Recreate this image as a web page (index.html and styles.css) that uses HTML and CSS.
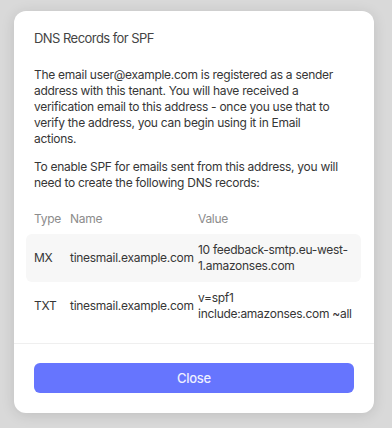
FILE: index.html
```html
<!DOCTYPE html>
<html lang="en">

<head>
    <meta charset="UTF-8">
    <title>DNS Records for SPF</title>
    <link rel="stylesheet" href="styles.css">
</head>

<body>
    <div class="modal">
        <div class="modal-body">
            <h2 class="modal-title">DNS Records for SPF</h2>
            <p>
                The email user@example.com is registered as a sender address with this tenant. You will have
                received a verification email to this address - once you use that to verify the address, you can
                begin using it in Email <br>
                actions.
            </p>
            <p>
                To enable SPF for emails sent from this address, you will need to create the following DNS records:
            </p>

            <!-- records table -->
            <div class="records">
                <div class="record-row head">
                    <span>Type</span>
                    <span>Name</span>
                    <span>Value</span>
                </div>
                <div class="record-row striped">
                    <span>MX</span>
                    <span>tinesmail.example.com</span>
                    <span>10 feedback-smtp.eu-west-1.amazonses.com</span>
                </div>
                <div class="record-row">
                    <span>TXT</span>
                    <span>tinesmail.example.com</span>
                    <span>v=spf1 include:amazonses.com ~all</span>
                </div>
            </div>
        </div>

        <div class="modal-footer">
            <button class="close-button">Close</button>
        </div>
    </div>
</body>

</html>
```

FILE: styles.css
```css
body {
    margin: 0;
    padding: 11px 18px 15px 14px;
    background: #d9d9d9;
    font-family: Inter, "Liberation Sans", sans-serif;
    font-size: 12px;
    letter-spacing: -0.28px;
    line-height: 16px;
    color: #363636;
}

/* 모달 카드 */
.modal {
    width: 360px;
    background: #fff;
    border-radius: 12px;
    box-shadow: 0 2px 14px rgba(0, 0, 0, 0.12);
}

.modal-body {
    padding: 17px 20px 13px;
}

.modal-title {
    margin: 0 0 19px;
    font-size: 13px;
    font-weight: 400;
    letter-spacing: -0.55px;
    line-height: 20px;
    color: #444;
}

.modal-body p {
    margin: 0 0 12px;
}

/* 레코드 테이블 */
.records {
    margin: 20px -7px 0 -8px;
}

.record-row {
    display: grid;
    grid-template-columns: 28px 120px 1fr;
    column-gap: 8px;
    align-items: center;
    padding: 8px 8px;
    border-radius: 6px;
}

.record-row.head {
    padding-top: 0;
    padding-bottom: 7px;
    color: #8c8c8c;
}

.record-row.striped {
    background: #f7f7f7;
}

/* 하단 버튼 영역 */
.modal-footer {
    border-top: 1px solid #efefef;
    padding: 19px 20px 20px;
}

.close-button {
    display: block;
    width: 100%;
    height: 30px;
    border: none;
    border-radius: 6px;
    background: #6675fe;
    color: #eef0ff;
    font-family: inherit;
    font-size: 13px;
    font-weight: 500;
    letter-spacing: -0.3px;
    cursor: pointer;
}
```
